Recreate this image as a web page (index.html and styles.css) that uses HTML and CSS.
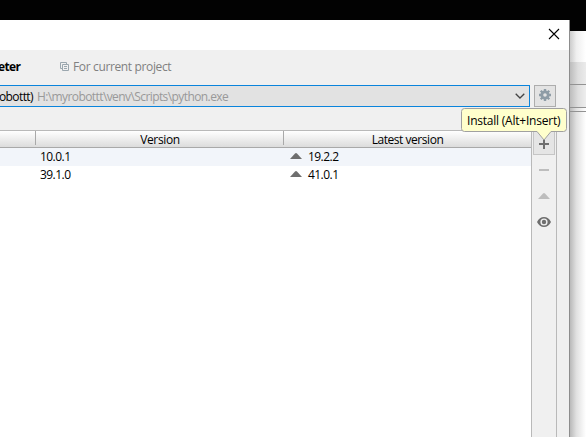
FILE: index.html
```
<!DOCTYPE html>
<html lang="en">
<head>
<meta charset="utf-8">
<title>Project Interpreter</title>
<link rel="stylesheet" href="styles.css">
</head>
<body>
<div class="screen">
  <div class="desktop"></div>
  <div class="workspace">
    <main class="dialog">
      <header class="titlebar">
        <svg class="close" width="12" height="12" viewBox="0 0 12 12"><path d="M1 1l10 10M11 1L1 11"/></svg>
      </header>
      <div class="crumbs">
        <strong class="page"><span class="t-page">eter</span></strong>
        <svg class="copy" width="10" height="10" viewBox="0 0 10 10"><path d="M2.500 6.500h-2v-6h6v2M2.500 2.500h6v6h-6zM4 4.500h3M4 6.500h3"/></svg>
        <span class="t-project">For current project</span>
      </div>
      <div class="interpreter">
        <div class="combo">
          <span class="t-name">obottt)</span><span class="path t-path">H:\myrobottt\venv\Scripts\python.exe</span>
          <svg class="chevron" width="10" height="6" viewBox="0 0 10 6"><path d="M.7.7L5 5 9.300.7"/></svg>
        </div>
        <button class="gear" aria-label="Settings">
          <svg width="12" height="12" viewBox="0 0 12 12"><g class="teeth"><path d="M6 0v12M0 6h12M1.750 1.750l8.500 8.500M10.250 1.750l-8.500 8.500"/></g><circle class="ring" cx="6" cy="6" r="3.200"/></svg>
        </button>
      </div>
      <div class="packages">
        <div class="table">
          <div class="row head"><div></div><div class="cell"><span class="t-version">Version</span></div><div class="cell"><span class="t-latest">Latest version</span></div></div>
          <div class="row selected"><div></div><div class="num"><span>10.0.1</span></div><div class="num latest"><svg width="12" height="6" viewBox="0 0 12 6"><path d="M0 6L5 .5Q6-.3 7 .5L12 6z"/></svg><span>19.2.2</span></div></div>
          <div class="row"><div></div><div class="num"><span>39.1.0</span></div><div class="num latest"><svg width="12" height="6" viewBox="0 0 12 6"><path d="M0 6L5 .5Q6-.3 7 .5L12 6z"/></svg><span>41.0.1</span></div></div>
        </div>
        <div class="tools">
          <div class="tool add"><svg width="10" height="10" viewBox="0 0 10 10"><path d="M0 4h4V0h2v4h4v2H6v4H4V6H0z"/></svg></div>
          <div class="tool off"><svg width="10" height="2" viewBox="0 0 10 2"><path d="M0 0h10v2H0z"/></svg></div>
          <div class="tool off"><svg width="12" height="6" viewBox="0 0 12 6"><path d="M0 6L5 .5Q6-.3 7 .5L12 6z"/></svg></div>
          <div class="tool"><svg width="14" height="10" viewBox="0 0 14 10"><path fill-rule="evenodd" d="M0 5Q2.500 0 7 0t7 5Q11.500 10 7 10T0 5zM7 1.400a3.600 3.600 0 1 0 0 7.200a3.600 3.600 0 1 0 0-7.200z"/><circle cx="7" cy="5" r="2.200"/></svg></div>
        </div>
      </div>
    </main>
    <aside class="behind"><div class="b-title"></div><div class="b-menu"></div><div class="b-bar"></div><div class="b-gap"></div><div class="b-page"></div></aside>
  </div>
  <div class="tooltip">
    <svg width="106" height="34" viewBox="0 0 106 34"><path d="M3.500.5h99q3 0 3 3v17q0 3-3 3H90L83 32l-7-8.500H3.500q-3 0-3-3v-17q0-3 3-3z"/></svg>
    <span class="tip-text t-tip">Install (Alt+Insert)</span>
  </div>
</div>
</body>
</html>
```
FILE: styles.css
```
* { box-sizing: border-box; }
body { margin: 0; overflow: hidden; font: 12px/16px "Open Sans", "Noto Sans", sans-serif; color: #000; }
svg { display: block; flex: none; }
span { white-space: nowrap; }
.screen { position: relative; width: 586px; height: 437px; background: #fff; overflow: hidden; }
.desktop { height: 20px; background: #020202; }
.workspace { display: flex; height: 417px; }
.dialog { width: 570px; border-right: 1px solid #8d8d8d; background: #f0f0f0; display: flex; flex-direction: column; }
.titlebar { height: 30px; background: #fff; display: flex; justify-content: flex-end; padding: 8px 9px 0 0; }
.close { fill: none; stroke: #000; stroke-width: 1.1; }
.crumbs { height: 35px; display: flex; align-items: center; padding-bottom: 1px; color: #808080; }
.page { width: 60px; color: #000; font-weight: 700; }
.copy { margin-right: 3px; fill: none; stroke: #9ba7af; }
.interpreter { display: flex; gap: 4px; height: 22px; }
.combo { width: 530px; border: 1px solid #0a84dc; border-left: 0; background: #e2e2e2; display: flex; align-items: center; padding: 1px 4px 0 0; }
.path { margin-left: 4px; color: #999; }
.chevron { margin: -2px 0 0 auto; fill: none; stroke: #444; stroke-width: 1.3; }
.gear { width: 22px; height: 22px; padding: 0 0 2px; border: 1px solid #adadad; background: #e3e3e3; display: flex; justify-content: center; align-items: center; }
.teeth { fill: none; stroke: #8e9ca6; stroke-width: 2.4; }
.ring { fill: #e3e3e3; stroke: #8e9ca6; stroke-width: 2.8; }
.packages { flex: 1; margin-top: 23px; width: 557px; border: 1px solid #b9b9b9; border-width: 1px 1px 0 0; display: flex; }
.table { width: 532px; border-right: 1px solid #b9b9b9; background: #fff; }
.row { display: grid; grid-template-columns: 35px 248px 248px; height: 18px; align-items: center; }
.head { height: 17px; border-bottom: 1px solid #a9a9a9; background: linear-gradient(#fff, #dcdcdc); }
.cell { height: 14px; border-left: 1px solid #a9a9a9; text-align: center; line-height: 18px; align-self: start; }
.selected { background: #f2f5fa; }
.num { display: flex; align-items: center; padding-left: 5px; letter-spacing: -.55px; }
.latest { padding-left: 7px; gap: 6px; }
.latest svg, .tool svg { fill: #6e6e6e; }
.latest svg { margin-top: -2px; }
.tools { width: 24px; display: flex; flex-direction: column; align-items: center; }
.tool { width: 22px; height: 26px; display: flex; justify-content: center; align-items: center; }
.add { height: 24px; margin-bottom: 2px; border: 1px solid #c5c5c5; background: #e5e5e5; padding-top: 2px; }
.off svg { fill: #bdbdbd; }
.behind { width: 16px; display: flex; flex-direction: column; background: linear-gradient(90deg, #b9b9b9, #e1e1e1 40%, #fff); }
.b-title { height: 42px; border-top: 11px solid #020202; background: linear-gradient(90deg, #ccc, #efefef 40%, #fff); }
.b-menu { height: 23px; border-bottom: 1px solid #929292; background: linear-gradient(90deg, #bcbcbc, #dedede 50%, #ebebeb); }
.b-bar { height: 23px; border-bottom: 1px solid #929292; background: linear-gradient(90deg, #bcbcbc, #dedede 50%, #eee); }
.b-gap { height: 4px; border-bottom: 1px solid #929292; }
.b-page { flex: 1; }
.tooltip { position: absolute; left: 461px; top: 108px; width: 106px; height: 34px; }
.tooltip svg { fill: #ffffcc; stroke: #a0a0a0; }
.tip-text { position: absolute; left: 6px; top: 5px; }
.t-page { letter-spacing: -.6px; margin-left: -2px; }
.t-project { letter-spacing: -.36px; }
.t-name { letter-spacing: -.6px; margin-left: -1px; }
.t-path { letter-spacing: -.59px; }
.t-version { letter-spacing: -.35px; margin-left: 1px; }
.t-latest { letter-spacing: -.45px; }
.t-tip { letter-spacing: -.22px; }
```
